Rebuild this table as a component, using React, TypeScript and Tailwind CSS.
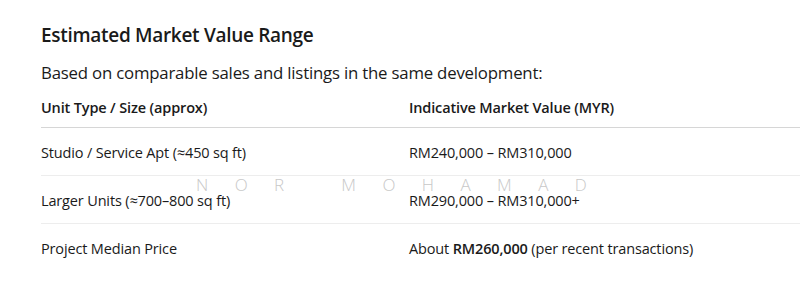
const rows = [
  { type: "Studio / Service Apt (≈450 sq ft)", value: <>RM240,000 – RM310,000</> },
  { type: "Larger Units (≈700–800 sq ft)", value: <>RM290,000 – RM310,000+</> },
  {
    type: "Project Median Price",
    value: (
      <>
        About <strong className="font-semibold">RM260,000</strong> (per recent transactions)
      </>
    ),
  },
];

export default function App() {
  return (
    <div
      className="relative w-[800px] h-[293px] overflow-hidden bg-white text-[#1a1a1a] pl-[41px] pt-[21px]"
      style={{ fontFamily: '"Open Sans", "Noto Sans", sans-serif' }}
    >
      <h2 className="text-[19px] font-semibold leading-[28px] tracking-[-0.3px]">Estimated Market Value Range</h2>
      <p className="mt-[11px] text-[16.8px] leading-[26px] tracking-[-0.2px]">
        Based on comparable sales and listings in the same development:
      </p>

      <table className="mt-[3px] w-[780px] border-collapse text-[14.5px] tracking-[-0.15px]">
        <thead>
          <tr className="border-b border-[#d6d6d6]">
            <th className="w-[368px] text-left font-semibold h-[38px] align-middle">Unit Type / Size (approx)</th>
            <th className="text-left font-semibold h-[38px] align-middle">Indicative Market Value (MYR)</th>
          </tr>
        </thead>
        <tbody>
          {rows.map((r, i) => (
            <tr key={i} className={i < rows.length - 1 ? "border-b border-[#ededed]" : ""}>
              <td className="h-[48px] align-middle pt-[4px]">{r.type}</td>
              <td className="h-[48px] align-middle pt-[4px]">{r.value}</td>
            </tr>
          ))}
        </tbody>
      </table>

      <div
        className="pointer-events-none absolute left-[196px] top-[175px] text-[17px] font-light leading-[20px] text-[#c8c8c8] tracking-[26.4px] whitespace-pre"
        style={{ fontFamily: '"Open Sans", sans-serif' }}
      >
        NOR MOHAMAD
      </div>
    </div>
  );
}
